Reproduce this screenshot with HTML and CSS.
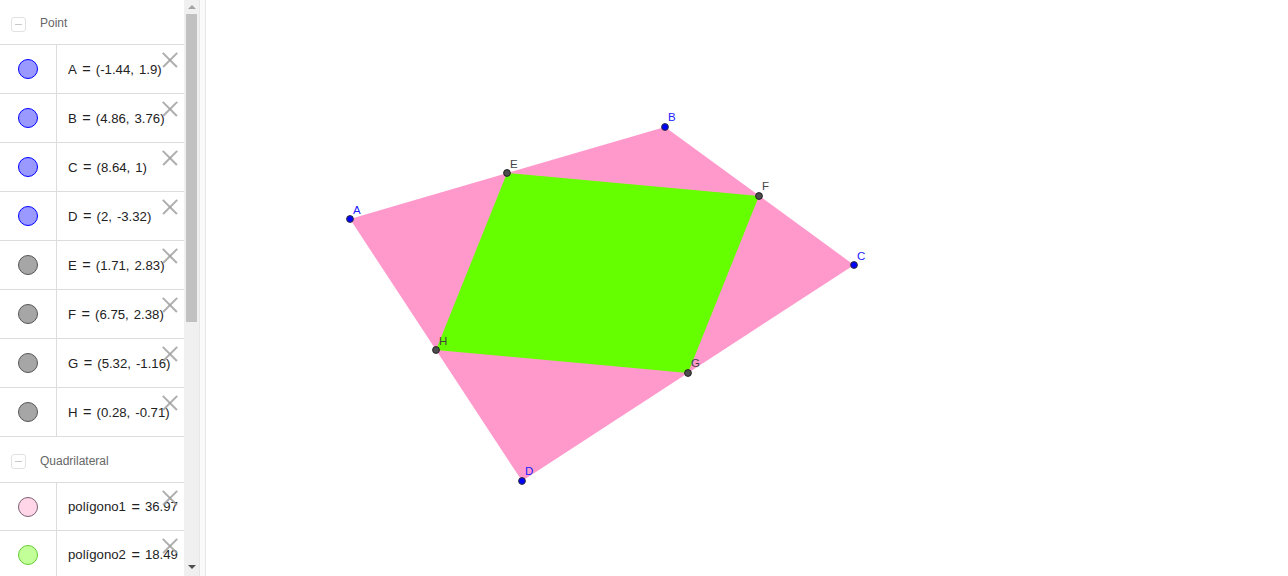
FILE: index.html
```html
<!DOCTYPE html>
<html>
<head>
<meta charset="utf-8">
<link rel="stylesheet" href="styles.css">
</head>
<body>
<div class="app">
  <aside class="algebra">
    <div class="list">
      <div class="group">
        <span class="toggle"><span class="minus"></span></span>
        <span class="group-title">Point</span>
      </div>
      <div class="item"><div class="marble m-free"></div><div class="def">A<span class="eq">=</span>(-1.44,<span class="sp"></span>1.9)</div><span class="close"></span></div>
      <div class="item"><div class="marble m-free"></div><div class="def">B<span class="eq">=</span>(4.86,<span class="sp"></span>3.76)</div><span class="close"></span></div>
      <div class="item"><div class="marble m-free"></div><div class="def">C<span class="eq">=</span>(8.64,<span class="sp"></span>1)</div><span class="close"></span></div>
      <div class="item"><div class="marble m-free"></div><div class="def">D<span class="eq">=</span>(2,<span class="sp"></span>-3.32)</div><span class="close"></span></div>
      <div class="item"><div class="marble m-dep"></div><div class="def">E<span class="eq">=</span>(1.71,<span class="sp"></span>2.83)</div><span class="close"></span></div>
      <div class="item"><div class="marble m-dep"></div><div class="def">F<span class="eq">=</span>(6.75,<span class="sp"></span>2.38)</div><span class="close"></span></div>
      <div class="item"><div class="marble m-dep"></div><div class="def">G<span class="eq">=</span>(5.32,<span class="sp"></span>-1.16)</div><span class="close"></span></div>
      <div class="item"><div class="marble m-dep"></div><div class="def">H<span class="eq">=</span>(0.28,<span class="sp"></span>-0.71)</div><span class="close"></span></div>
      <div class="group group-b">
        <span class="toggle"><span class="minus"></span></span>
        <span class="group-title">Quadrilateral</span>
      </div>
      <div class="item item-q"><div class="marble m-pink"></div><div class="def">polígono1<span class="eq">=</span>36.97</div><span class="close"></span></div>
      <div class="item item-q"><div class="marble m-green"></div><div class="def">polígono2<span class="eq">=</span>18.49</div><span class="close"></span></div>
    </div>
    <div class="scrollbar">
      <span class="arrow arrow-up"></span>
      <div class="track"><div class="thumb"></div></div>
      <span class="arrow arrow-down"></span>
    </div>
  </aside>
  <div class="splitter"></div>
  <main class="graphics">
    <svg class="canvas" viewBox="206 0 1082 576" width="1082" height="576" xmlns="http://www.w3.org/2000/svg">
      <polygon points="350,219 665,127 854,265 522,481" fill="#ff99cc"/>
      <polygon points="507,173 759,196 688,373 436,350" fill="#66ff00"/>
      <g stroke="#333" stroke-width="1" fill="#0000ff">
        <circle cx="350" cy="219" r="3.4"/>
        <circle cx="665" cy="127" r="3.4"/>
        <circle cx="854" cy="265" r="3.4"/>
        <circle cx="522" cy="481" r="3.4"/>
      </g>
      <g stroke="#222" stroke-width="1" fill="#4d4d4d">
        <circle cx="507" cy="173" r="3.4"/>
        <circle cx="759" cy="196" r="3.4"/>
        <circle cx="688" cy="373" r="3.4"/>
        <circle cx="436" cy="350" r="3.4"/>
      </g>
      <g class="lbl lbl-free">
        <text x="353" y="214">A</text>
        <text x="668" y="121">B</text>
        <text x="857" y="260">C</text>
        <text x="525" y="475">D</text>
      </g>
      <g class="lbl lbl-dep">
        <text x="510" y="168">E</text>
        <text x="762" y="190">F</text>
        <text x="691" y="367">G</text>
        <text x="439" y="345">H</text>
      </g>
    </svg>
  </main>
</div>
</body>
</html>
```

FILE: styles.css
```css
html, body {
  margin: 0;
  padding: 0;
  background: #ffffff;
  overflow: hidden;
}

.app {
  display: flex;
  width: 1288px;
  height: 576px;
  font-family: "Liberation Sans", Arial, sans-serif;
}

.algebra {
  display: flex;
  width: 199px;
  height: 576px;
  flex: none;
  background: #fff;
}

.list {
  width: 184px;
  flex: none;
  overflow: hidden;
}

.group {
  display: flex;
  align-items: center;
  height: 45px;
  border-bottom: 1px solid #dcdcdc;
  box-sizing: border-box;
  padding-left: 11px;
  padding-top: 2px;
}

.group-b {
  height: 46px;
}

.toggle {
  width: 15px;
  height: 15px;
  box-sizing: border-box;
  border: 1px solid #e2e2e2;
  border-radius: 3px;
  display: flex;
  align-items: center;
  justify-content: center;
  margin-top: 2px;
}

.minus {
  width: 7px;
  height: 1px;
  background: #c8c8c8;
}

.group-title {
  margin-left: 14px;
  font-size: 12px;
  color: #666;
  font-family: "Liberation Sans", Arial, sans-serif;
}

.item {
  position: relative;
  display: grid;
  grid-template-columns: 56px 1fr;
  height: 49px;
  box-sizing: border-box;
  border-bottom: 1px solid #dcdcdc;
}

.item-q {
  height: 48px;
}

.marble {
  align-self: center;
  justify-self: center;
  width: 20px;
  height: 20px;
  box-sizing: border-box;
  border-radius: 50%;
}

.m-free {
  background: #9999ff;
  border: 1px solid #0000ff;
}

.m-dep {
  background: #a6a6a6;
  border: 1px solid #555555;
}

.m-pink {
  background: #ffd6e8;
  border: 1px solid #7a6070;
}

.m-green {
  background: #c2ff99;
  border: 1px solid #66cc33;
}

.def {
  border-left: 1px solid #dcdcdc;
  display: flex;
  align-items: center;
  padding-left: 11px;
  font-size: 13.2px;
  color: #222;
  white-space: nowrap;
}

.eq {
  margin: 0 5px 0 5.5px;
  font-size: 14.5px;
}

.sp {
  display: inline-block;
  width: 5px;
}

.close {
  position: absolute;
  right: 6px;
  top: 7px;
  width: 16px;
  height: 16px;
}

.close::before,
.close::after {
  content: "";
  position: absolute;
  left: -2px;
  top: 7px;
  width: 20px;
  height: 1.5px;
  background: #a0a0a0;
  opacity: 0.85;
  transform: rotate(45deg);
}

.close::after {
  transform: rotate(-45deg);
}

.scrollbar {
  position: relative;
  width: 15px;
  flex: none;
  background: #f0f0f0;
  display: flex;
  flex-direction: column;
  align-items: center;
}

.track {
  flex: 1;
  width: 100%;
  padding: 14px 2px;
  box-sizing: border-box;
}

.thumb {
  width: 11px;
  height: 308px;
  background: #c1c1c1;
}

.arrow {
  position: absolute;
  left: 4px;
  width: 0;
  height: 0;
  border-left: 4px solid transparent;
  border-right: 4px solid transparent;
}

.arrow-up {
  top: 5px;
  border-bottom: 4px solid #a3a3a3;
}

.arrow-down {
  bottom: 7px;
  border-top: 4px solid #505050;
}

.splitter {
  width: 7px;
  flex: none;
  box-sizing: border-box;
  background: #fafafa;
  border-left: 1px solid #e6e6e6;
  border-right: 1px solid #e6e6e6;
}

.graphics {
  flex: 1;
  height: 576px;
  background: #fff;
}

.canvas {
  display: block;
}

.lbl text {
  font-family: "Liberation Sans", Arial, sans-serif;
  font-size: 11.5px;
}

.lbl-free {
  fill: #2020ff;
}

.lbl-dep {
  fill: #444444;
}
```
